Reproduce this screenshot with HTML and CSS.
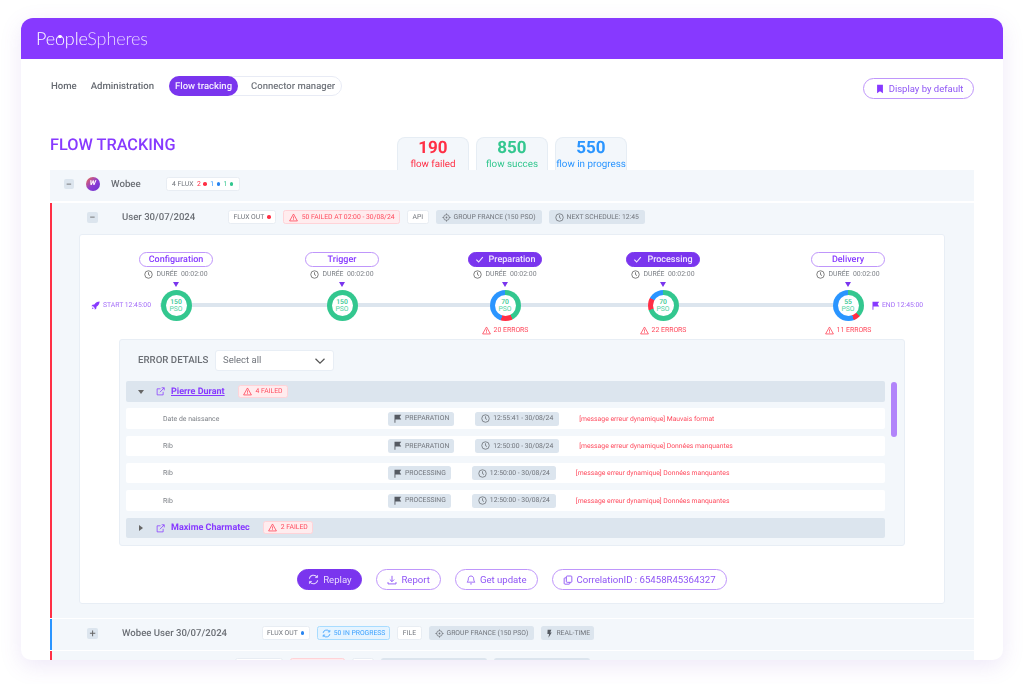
FILE: index.html
```html
<!DOCTYPE html>
<html lang="en">
<head>
<meta charset="utf-8">
<title>Flow tracking</title>
<link rel="stylesheet" href="styles.css">
</head>
<body>
<svg class="defs" width="0" height="0" aria-hidden="true">
  <symbol id="clock" viewBox="0 0 12 12"><circle cx="6" cy="6" r="5" fill="none" stroke="currentColor" stroke-width="1.1"/><path d="M6 3v3.2l2 1.2" fill="none" stroke="currentColor" stroke-width="1.1"/></symbol>
  <symbol id="warn" viewBox="0 0 12 12"><path d="M6 1.3 11.2 10.6H.8Z" fill="none" stroke="currentColor" stroke-width="1.1" stroke-linejoin="round"/><path d="M6 4.6v3M6 8.4v1" stroke="currentColor" stroke-width="1.1"/></symbol>
  <symbol id="target" viewBox="0 0 12 12"><circle cx="6" cy="6" r="3.8" fill="none" stroke="currentColor" stroke-width="1"/><circle cx="6" cy="6" r="1.2" fill="currentColor"/><path d="M6 .5v2M6 9.5v2M.5 6h2M9.5 6h2" stroke="currentColor" stroke-width="1"/></symbol>
  <symbol id="flag" viewBox="0 0 12 12"><path d="M2 1h9L8.8 4 11 7.2H3.2V11.5H2Z" fill="currentColor"/></symbol>
  <symbol id="bolt" viewBox="0 0 12 12"><path d="M3.5 1h5L7 4.6h2L4.6 11.5 5.4 6.6H3.2Z" fill="currentColor"/></symbol>
  <symbol id="bookmark" viewBox="0 0 12 12"><path d="M2.5 1h7v10L6 8.6 2.5 11Z" fill="currentColor"/></symbol>
  <symbol id="rocket" viewBox="0 0 12 12"><path d="M11.5.5C8.5.6 6 2 4.4 4.7L2 4.9.5 7l2.3.1 2.1 2.1L5 11.5l2.1-1.5.2-2.4C10 6 11.4 3.500 11.500.5Z" fill="currentColor"/><path d="M2.400 8.300 1 11l2.700-1.400Z" fill="currentColor"/></symbol>
  <symbol id="sync" viewBox="0 0 12 12"><path d="M1.500 5.200A4.600 4.600 0 0 1 9.800 3.300M10.500 6.800A4.600 4.600 0 0 1 2.200 8.700" fill="none" stroke="currentColor" stroke-width="1.100"/><path d="M10.400 1.300v2.600H7.800M1.600 10.700V8.100h2.600" fill="none" stroke="currentColor" stroke-width="1"/></symbol>
  <symbol id="download" viewBox="0 0 12 12"><path d="M6 1v6.800M3.400 5.400 6 8l2.600-2.600M1.200 8.500v2.200h9.600V8.500" fill="none" stroke="currentColor" stroke-width="1.100"/></symbol>
  <symbol id="bell" viewBox="0 0 12 12"><path d="M6 1.200c-2 0-3.200 1.500-3.200 3.400 0 2.400-1 3.400-1.500 4h9.400c-.5-.6-1.500-1.600-1.500-4 0-1.900-1.200-3.400-3.200-3.400ZM4.800 10.200c.3.700 2.100.7 2.400 0" fill="none" stroke="currentColor" stroke-width="1"/></symbol>
  <symbol id="copy" viewBox="0 0 12 12"><rect x="4" y="1.200" width="6.600" height="7.600" rx="1" fill="none" stroke="currentColor" stroke-width="1.100"/><path d="M4 3.400H2.400a1 1 0 0 0-1 1V10a1 1 0 0 0 1 1h4.800a1 1 0 0 0 1-1V8.800" fill="none" stroke="currentColor" stroke-width="1.100"/></symbol>
  <symbol id="external" viewBox="0 0 12 12"><path d="M6 2.400H1.500v8.100h8V6.400M5.200 7 10.800 1.200M7.500 1h3.500v3.500" fill="none" stroke="currentColor" stroke-width="1"/></symbol>
  <symbol id="check" viewBox="0 0 12 12"><path d="M1.800 6.300 4.800 9.300 10.400 2.800" fill="none" stroke="currentColor" stroke-width="1.400"/></symbol>
  <symbol id="chev" viewBox="0 0 12 12"><path d="M1.500 3.800 6 8.200l4.500-4.400" fill="none" stroke="currentColor" stroke-width="1.200"/></symbol>
</svg>

<main class="card">
  <header class="topbar">
    <div class="logo"><span class="logo-a">Pe<span class="logo-o">o</span>ple</span><span class="logo-b">Spheres</span></div>
  </header>

  <div class="content">
    <nav class="nav">
      <a class="nav-link">Home</a>
      <a class="nav-link">Administration</a>
      <div class="nav-pill">
        <a class="pill-active">Flow tracking</a>
        <a class="pill-link">Connector manager</a>
      </div>
      <button class="btn default-btn"><svg class="ic10"><use href="#bookmark"/></svg>Display by default</button>
    </nav>

    <div class="title-row">
      <h1 class="title">FLOW TRACKING</h1>
      <div class="tabs">
        <div class="tab red"><b>190</b><span>flow failed</span></div>
        <div class="tab green"><b>850</b><span>flow succes</span></div>
        <div class="tab blue"><b>550</b><span>flow in progress</span></div>
      </div>
    </div>

    <section class="group-row">
      <span class="sq sq-small">−</span>
      <span class="wobee">w</span>
      <span class="group-name">Wobee</span>
      <span class="tag tag-white flux">4 FLUX <i class="t-red">2</i><i class="dot bg-red"></i><i class="t-blue">1</i><i class="dot bg-blue"></i><i class="t-green">1</i><i class="dot bg-green"></i></span>
    </section>

    <section class="flow flow-red">
      <div class="flow-row">
        <span class="sq">−</span>
        <span class="flow-name">User 30/07/2024</span>
        <div class="tags">
          <span class="tag tag-white">FLUX OUT<i class="dot bg-red"></i></span>
          <span class="tag tag-fail"><svg class="ic9"><use href="#warn"/></svg>50 FAILED AT 02:00 - 30/08/24</span>
          <span class="tag tag-white">API</span>
          <span class="tag tag-grey"><svg class="ic9"><use href="#target"/></svg>GROUP FRANCE (150 PSO)</span>
          <span class="tag tag-grey"><svg class="ic9"><use href="#clock"/></svg>NEXT SCHEDULE: 12:45</span>
        </div>
      </div>

      <div class="box">
        <div class="stepper">
          <span class="track"></span>
          <span class="edge edge-start"><svg class="ic9"><use href="#rocket"/></svg>START 12:45:00</span>
          <span class="edge edge-end"><svg class="ic9"><use href="#flag"/></svg>END 12:45:00</span>

          <div class="step">
            <span class="step-pill">Configuration</span>
            <span class="duree"><svg class="ic9"><use href="#clock"/></svg>DURÉE&nbsp; 00:02:00</span>
            <span class="arrow"></span>
            <span class="donut d-full"><span class="donut-in"><b>150</b>PSO</span></span>
          </div>
          <div class="step">
            <span class="step-pill">Trigger</span>
            <span class="duree"><svg class="ic9"><use href="#clock"/></svg>DURÉE&nbsp; 00:02:00</span>
            <span class="arrow"></span>
            <span class="donut d-full"><span class="donut-in"><b>150</b>PSO</span></span>
          </div>
          <div class="step">
            <span class="step-pill on"><svg class="ic9"><use href="#check"/></svg>Preparation</span>
            <span class="duree"><svg class="ic9"><use href="#clock"/></svg>DURÉE&nbsp; 00:02:00</span>
            <span class="arrow"></span>
            <span class="donut d-prep"><span class="donut-in"><b>70</b>PSO</span></span>
            <span class="errs"><svg class="ic9"><use href="#warn"/></svg>20 ERRORS</span>
          </div>
          <div class="step">
            <span class="step-pill on"><svg class="ic9"><use href="#check"/></svg>Processing</span>
            <span class="duree"><svg class="ic9"><use href="#clock"/></svg>DURÉE&nbsp; 00:02:00</span>
            <span class="arrow"></span>
            <span class="donut d-proc"><span class="donut-in"><b>70</b>PSO</span></span>
            <span class="errs"><svg class="ic9"><use href="#warn"/></svg>22 ERRORS</span>
          </div>
          <div class="step">
            <span class="step-pill">Delivery</span>
            <span class="duree"><svg class="ic9"><use href="#clock"/></svg>DURÉE&nbsp; 00:02:00</span>
            <span class="arrow"></span>
            <span class="donut d-del"><span class="donut-in"><b>55</b>PSO</span></span>
            <span class="errs"><svg class="ic9"><use href="#warn"/></svg>11 ERRORS</span>
          </div>
        </div>

        <div class="errors">
          <div class="errors-head">
            <span class="errors-title">ERROR DETAILS</span>
            <span class="select">Select all<svg class="ic12"><use href="#chev"/></svg></span>
          </div>
          <div class="errors-body">
            <div class="list">
              <div class="person">
                <i class="tri-down"></i>
                <svg class="ic9 purple"><use href="#external"/></svg>
                <a class="person-name linked">Pierre Durant</a>
                <span class="tag tag-fail"><svg class="ic9"><use href="#warn"/></svg>4 FAILED</span>
              </div>
              <div class="err">
                <span class="err-name">Date de naissance</span>
                <span class="tag tag-grey tag-stage"><svg class="ic9 dark"><use href="#flag"/></svg>PREPARATION</span>
                <span class="tag tag-grey tag-time"><svg class="ic9"><use href="#clock"/></svg>12:55:41 - 30/08/24</span>
                <span class="err-msg">[message erreur dynamique] Mauvais format</span>
              </div>
              <div class="err">
                <span class="err-name">Rib</span>
                <span class="tag tag-grey tag-stage"><svg class="ic9 dark"><use href="#flag"/></svg>PREPARATION</span>
                <span class="tag tag-grey tag-time"><svg class="ic9"><use href="#clock"/></svg>12:50:00 - 30/08/24</span>
                <span class="err-msg">[message erreur dynamique] Données manquantes</span>
              </div>
              <div class="err">
                <span class="err-name">Rib</span>
                <span class="tag tag-grey tag-stage"><svg class="ic9 dark"><use href="#flag"/></svg>PROCESSING</span>
                <span class="tag tag-grey tag-time"><svg class="ic9"><use href="#clock"/></svg>12:50:00 - 30/08/24</span>
                <span class="err-msg">[message erreur dynamique] Données manquantes</span>
              </div>
              <div class="err">
                <span class="err-name">Rib</span>
                <span class="tag tag-grey tag-stage"><svg class="ic9 dark"><use href="#flag"/></svg>PROCESSING</span>
                <span class="tag tag-grey tag-time"><svg class="ic9"><use href="#clock"/></svg>12:50:00 - 30/08/24</span>
                <span class="err-msg">[message erreur dynamique] Données manquantes</span>
              </div>
              <div class="person">
                <i class="tri-right"></i>
                <svg class="ic9 purple"><use href="#external"/></svg>
                <a class="person-name">Maxime Charmatec</a>
                <span class="tag tag-fail"><svg class="ic9"><use href="#warn"/></svg>2 FAILED</span>
              </div>
            </div>
            <div class="scrollbar"><span class="thumb"></span></div>
          </div>
        </div>

        <div class="actions">
          <button class="btn btn-solid"><svg class="ic11"><use href="#sync"/></svg>Replay</button>
          <button class="btn"><svg class="ic10"><use href="#download"/></svg>Report</button>
          <button class="btn"><svg class="ic10"><use href="#bell"/></svg>Get update</button>
          <button class="btn"><svg class="ic10"><use href="#copy"/></svg>CorrelationID : 65458R45364327</button>
        </div>
      </div>
    </section>

    <section class="flow flow-blue">
      <div class="flow-row">
        <span class="sq">+</span>
        <span class="flow-name">Wobee User 30/07/2024</span>
        <div class="tags">
          <span class="tag tag-white">FLUX OUT<i class="dot bg-blue"></i></span>
          <span class="tag tag-prog"><svg class="ic9"><use href="#sync"/></svg>50 IN PROGRESS</span>
          <span class="tag tag-white">FILE</span>
          <span class="tag tag-grey"><svg class="ic9"><use href="#target"/></svg>GROUP FRANCE (150 PSO)</span>
          <span class="tag tag-grey tag-tight"><svg class="ic9 dark"><use href="#bolt"/></svg>REAL-TIME</span>
        </div>
      </div>
    </section>

    <section class="flow flow-red">
      <div class="flow-row">
        <span class="sq">+</span>
        <span class="flow-name name-last">User 30/07/2024</span>
        <div class="tags">
          <span class="tag tag-white">FLUX OUT<i class="dot bg-red"></i></span>
          <span class="tag tag-fail"><svg class="ic9"><use href="#warn"/></svg>50 FAILED</span>
          <span class="tag tag-white">API</span>
          <span class="tag tag-grey"><svg class="ic9"><use href="#target"/></svg>GROUP FRANCE (150 PSO)</span>
          <span class="tag tag-grey"><svg class="ic9"><use href="#clock"/></svg>NEXT SCHEDULE: 12:45</span>
        </div>
      </div>
    </section>
  </div>
</main>
</body>
</html>
```

FILE: styles.css
```css
* { box-sizing: border-box; }
html, body { margin: 0; height: 684px; overflow: hidden; background: #fff; }
body { padding: 18px 21px 24px; font-family: Roboto, "Liberation Sans", sans-serif; color: #6b6f76; text-rendering: geometricPrecision; }
.defs { position: absolute; }
i { font-style: normal; }
svg { flex: none; display: block; }
.ic9 { width: 9px; height: 9px; }
.ic10 { width: 10px; height: 10px; }
.ic11 { width: 11px; height: 11px; }
.ic12 { width: 12px; height: 12px; }
.purple { color: #8739ff; }
.dark { color: #555a62; }

.card {
  height: 642px; background: #fff; border-radius: 12px 12px 10px 10px; overflow: hidden;
  box-shadow: 0 6px 22px rgba(120, 80, 200, .13);
  filter: blur(.35px);
}
.topbar { height: 41px; background: #8739ff; padding: 0 0 2px 15px; display: flex; align-items: center; }
.logo { font-family: Lato, "Open Sans", sans-serif; font-size: 18px; color: #fff; line-height: 1; letter-spacing: -.15px; }
.logo-a { font-weight: 300; }
.logo-b { font-weight: 300; opacity: .8; }
.logo-o { position: relative; }
.logo-o::after { content: ""; position: absolute; left: 3.500px; top: 8px; width: 3.500px; height: 3.500px; border-radius: 50%; background: #fff; }

.content { padding: 0 29px; }
.nav { display: flex; align-items: flex-start; padding: 17px 0 0 1px; height: 78px; }
.nav-link { font-size: 9.600px; font-weight: 500; line-height: 20px; padding-top: 1px; color: #666a71; margin-right: 14px; }
.nav-link + .nav-pill { margin-left: 1px; }
.nav-pill { display: flex; width: 173px; height: 20px; border: 1px solid #e8ebf5; border-radius: 10px; font-size: 9.500px; font-weight: 500; line-height: 20px; }
.pill-active { width: 69px; margin: -1px 0 -1px -1px; line-height: 21px; text-align: center; border-radius: 10px; background: #7a35ee; color: #f3ecff; white-space: nowrap; }
.pill-link { padding-left: 13px; color: #73777e; white-space: nowrap; }

.btn {
  display: inline-flex; align-items: center; justify-content: center; gap: 4px; height: 21px; padding: 0 10px;
  border: 1px solid #bf96fb; border-radius: 11px; background: #fff; color: #8f55f5;
  font-family: Roboto, "Liberation Sans", sans-serif; font-size: 9.600px; line-height: 1;
}
.default-btn { margin: 2px 0 0 auto; width: 111px; padding: 0 0 0 1px; font-size: 9.500px; font-weight: 400; gap: 4px; }
.default-btn svg { color: #8739ff; }

.title-row { display: flex; height: 33px; }
.title { margin: 0; width: 347px; font-size: 16.300px; line-height: 15px; font-weight: 500; color: #8739ff; }
.tabs { display: flex; gap: 7px; }
.tab {
  width: 72px; height: 33px; padding-top: 1px; display: flex; flex-direction: column; align-items: center;
  background: #f3f7fb; border: 1px solid #e6edf4; border-bottom: 0; border-radius: 8px 8px 0 0;
}
.tab b { font-size: 17px; line-height: 18px; font-weight: 700; }
.tab span { font-size: 9.800px; line-height: 12px; margin-top: 2px; white-space: nowrap; }
.tab.red { color: #ff2f45; }
.tab.green { color: #33c78f; }
.tab.blue { color: #2a95ff; }

.group-row { height: 31px; background: #f3f7fb; display: flex; align-items: center; padding: 0 0 3px 14px; margin-bottom: 2px; }
.sq { width: 11px; height: 11px; background: #dce5ee; border-radius: 2px; display: flex; align-items: center; justify-content: center; font-size: 11px; line-height: 1; color: #666; flex: none; }
.sq-small { width: 10px; height: 10px; }
.wobee {
  width: 14px; height: 14px; margin-left: 12px; border-radius: 50%;
  background: linear-gradient(135deg, #ef6d4d, #8a3bd6 55%, #6b35c8);
  color: #fff; font-size: 9px; font-weight: 700; font-style: italic; text-align: center; line-height: 13px;
}
.group-name { font-size: 9.700px; font-weight: 500; margin-left: 11px; width: 55px; color: #6b6f75; }

.tag {
  display: inline-flex; align-items: center; gap: 4px; height: 14px; padding: 0 5px; border-radius: 2.500px;
  font-size: 6.800px; line-height: 1; white-space: nowrap; color: #70747b; flex: none;
}
.tag-white { background: #fff; border: 1px solid #e8edf3; gap: 3px; padding: 0 4.500px; }
.tag-grey { background: #dce5ee; padding: 0 6px; gap: 3px; }
.tag-stage { padding: 0 5px; }
.tag-tight { padding: 0 4px; gap: 2px; }
.tag-fail { background: #ffecee; border: 1px solid #ffd3d8; color: #ff4a5d; padding: 0 4.500px; }
.tag-prog { background: #e6f4ff; border: 1px solid #a8dcff; color: #3aa0ff; padding: 0 4px; gap: 3px; }
.flux { gap: 2.500px; width: 74px; padding: 0 5px; }
.dot { width: 3.500px; height: 3.500px; border-radius: 50%; display: inline-block; }
.bg-red { background: #ff2f45; }
.bg-blue { background: #2a85f0; }
.bg-green { background: #33c78f; }
.t-red { color: #ff2f45; margin-left: 1px; }
.t-blue { color: #2a95ff; margin-left: 1px; }
.t-green { color: #33c78f; margin-left: 1px; }

.flow { display: flow-root; background: #f3f7fb; border-left: 2px solid; margin-bottom: 1px; }
.flow-red { border-color: #ff2f45; }
.flow-blue { border-color: #2a95ff; }
.flow-row { height: 31px; display: flex; align-items: center; padding: 0 0 0 35px; }
.flow-row .sq { margin-top: -3px; }
.flow-row .tag { margin-top: -3px; }
.flow-name { font-size: 9.600px; font-weight: 500; width: 106px; margin-left: 24px; color: #6b6f75; margin-top: -2px; flex: none; white-space: nowrap; }
.flow-blue .flow-name { width: 139.500px; }
.flow-red .name-last { width: 113px; }
.tags { display: flex; gap: 7px; }

.box { margin: 0 29px 14px 27px; height: 370px; background: #fff; border: 1px solid #e8eef5; border-radius: 3px; padding-top: 17px; }
.stepper {
  position: relative; height: 87px; padding-left: 56px;
  display: grid; grid-template-columns: 166px 163px 158px 185px 80px; align-items: start;
}
.track { position: absolute; left: 80px; width: 700px; top: 51px; height: 4px; background: #dce5ee; }
.edge { position: absolute; top: 49px; display: flex; align-items: center; gap: 3px; font-size: 6.800px; color: #a36cf8; line-height: 9px; white-space: nowrap; background: #fff; }
.edge svg { color: #8739ff; }
.edge-start { left: 11px; }
.edge-end { left: 791px; gap: 2px; }
.step { position: relative; width: 80px; display: flex; flex-direction: column; align-items: center; }
.step-pill {
  width: 74px; height: 15px; padding-top: 1px; border: 1px solid #bf96fb; border-radius: 8px; color: #8739ff;
  font-size: 9px; font-weight: 500; line-height: 12px; display: flex; align-items: center; justify-content: center; gap: 5px; background: #fff;
}
.step-pill svg { margin-top: -1px; }
.step-pill.on { background: #7a35ee; border-color: #7a35ee; color: #efe6ff; }
.duree { display: flex; align-items: center; gap: 3px; font-size: 6.900px; line-height: 9px; color: #7d8187; margin-top: 3px; white-space: nowrap; }
.duree svg { color: #666; }
.arrow { margin-top: 3px; width: 0; height: 0; border-left: 3.500px solid transparent; border-right: 3.500px solid transparent; border-top: 5px solid #7a35ee; }
.donut { position: relative; width: 31px; height: 31px; margin-top: 3px; border-radius: 50%; padding: 5px; flex: none; }
.donut-in { width: 21px; height: 21px; border-radius: 50%; background: #fff; display: flex; flex-direction: column; align-items: center; justify-content: center; font-size: 6.800px; line-height: 7px; color: #4ed3a0; }
.donut-in b { font-weight: 500; color: #33c78f; }
.d-full { background: #33c78f; }
.d-prep { background: conic-gradient(#33c78f 0 152deg, #ff2f45 152deg 198deg, #2a95ff 198deg 360deg); }
.d-proc { background: conic-gradient(#33c78f 0 252deg, #ff2f45 252deg 300deg, #2a95ff 300deg 360deg); }
.d-del { background: conic-gradient(#33c78f 0 135deg, #ff2f45 135deg 160deg, #2a95ff 160deg 360deg); }
.errs { display: flex; align-items: center; gap: 3px; margin-top: 5px; font-size: 6.900px; line-height: 9px; color: #ff4a5d; white-space: nowrap; }

.errors { margin: 0 39px; height: 207px; background: #f3f7fb; border: 1px solid #e8eef5; border-radius: 3px; padding: 10px 6px 0; }
.errors-head { display: flex; align-items: center; padding-left: 12px; height: 21px; gap: 7px; }
.errors-title { font-size: 9.700px; font-weight: 500; color: #6b6f75; width: 70px; white-space: nowrap; }
.select { width: 119px; height: 21px; background: #fff; border: 1px solid #e8eef5; border-radius: 3px; padding: 0 7px; display: flex; align-items: center; justify-content: space-between; font-size: 9.500px; color: #73777e; }
.select svg { color: #555; }
.errors-body { display: flex; margin-top: 10px; }
.list { width: 759px; display: flex; flex-direction: column; gap: 6.830px; }
.person { height: 20.500px; background: #dce5ee; border-radius: 2px; display: flex; align-items: center; padding: 1px 0 0 12px; }
.person .tag { height: 13px; margin-top: -1px; padding: 0 4px; }
.tri-down { width: 0; height: 0; border-left: 3px solid transparent; border-right: 3px solid transparent; border-top: 4px solid #666; margin-right: 12px; }
.tri-right { width: 0; height: 0; border-top: 3px solid transparent; border-bottom: 3px solid transparent; border-left: 4px solid #666; margin: 0 13px 0 1px; }
.person-name { margin-left: 6px; margin-right: 13px; font-size: 9px; font-weight: 700; color: #8739ff; white-space: nowrap; }
.linked { text-decoration: underline; }
.err { height: 20.500px; background: #fff; border-radius: 2px; display: flex; align-items: center; padding-left: 37px; }
.err-name { width: 225px; font-size: 6.900px; color: #7d8187; flex: none; }
.tag-time { margin-left: 21px; }
.err-msg { margin-left: 20px; font-size: 6.800px; color: #ff4a5d; white-space: nowrap; }
.scrollbar { margin-left: 6px; width: 6px; }
.thumb { display: block; height: 55px; width: 6px; border-radius: 3px; background: #b184fa; margin-top: 1px; }

.actions { display: flex; justify-content: center; gap: 14px; margin-top: 23px; }
.btn-solid { background: #7a35ee; border-color: #7a35ee; color: #e9dcff; width: 65px; padding: 0; }
```
